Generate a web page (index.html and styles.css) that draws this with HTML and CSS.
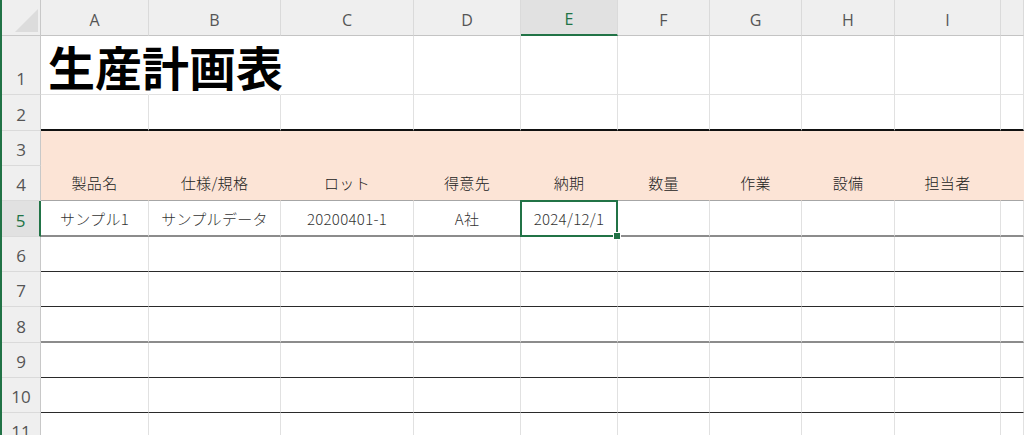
FILE: index.html
```html
<!DOCTYPE html>
<html lang="ja">
<head>
    <meta charset="UTF-8">
    <meta name="viewport" content="width=device-width, initial-scale=1.0">
    <title>生産計画表</title>
    <link rel="stylesheet" href="styles.css">
</head>
<body>
    <div class="window">
        <div id="sheet" class="sheet"></div>
    </div>

    <script>
        const cols = ["A", "B", "C", "D", "E", "F", "G", "H", "I", "J"];
        const activeCol = "E";
        const activeRow = 5;

        const values = {
            1: { A: "生産計画表" },
            4: { A: "製品名", B: "仕様/規格", C: "ロット", D: "得意先", E: "納期", F: "数量", G: "作業", H: "設備", I: "担当者" },
            5: { A: "サンプル1", B: "サンプルデータ", C: "20200401-1", D: "A社", E: "2024/12/1" }
        };

        const sheet = document.getElementById("sheet");

        // column header band
        const head = document.createElement("div");
        head.className = "row row-head";
        head.innerHTML = `<div class="corner"><svg width="24" height="24" viewBox="0 0 24 24"><polygon points="0,23 23,23 23,0" fill="#dcdcdc"/></svg></div>`;
        cols.forEach(c => {
            const h = document.createElement("div");
            h.className = "col-head" + (c === activeCol ? " active" : "");
            h.textContent = c === "J" ? "" : c;
            head.appendChild(h);
        });
        sheet.appendChild(head);

        for (let r = 1; r <= 11; r++) {
            const row = document.createElement("div");
            row.className = `row row-${r}`;

            const num = document.createElement("div");
            num.className = "row-num" + (r === activeRow ? " active" : "");
            num.textContent = r;
            row.appendChild(num);

            cols.forEach(c => {
                const cell = document.createElement("div");
                cell.className = "cell col-" + c;
                if (r === activeRow && c === activeCol) cell.classList.add("selected");
                const v = values[r] && values[r][c];
                if (v) {
                    const span = document.createElement("span");
                    span.textContent = v;
                    if (r === 1) span.className = "title";
                    cell.appendChild(span);
                }
                row.appendChild(cell);
            });
            sheet.appendChild(row);
        }
    </script>
</body>
</html>
```

FILE: styles.css
```css
body {
    margin: 0;
    padding: 0;
    background-color: #fff;
    font-family: "Noto Sans CJK JP", "Noto Sans", sans-serif;
    overflow: hidden;
}
.window {
    height: 435px;
    border-left: 2px solid #217346;
    overflow: hidden;
}
.sheet {
    display: grid;
    grid-template-columns: 39px 108px 132px 133px 107px 97px 92px 92px 93px 106px 1fr;
    grid-template-rows: 36px 59px 36px 35px 35px 36px 35px 35px 36px 35px 35px 35px;
}
.row {
    display: contents;
}

/* headers */
.corner {
    background-color: #efefef;
    border-right: 1px solid #c8c8c8;
    border-bottom: 1px solid #c8c8c8;
    display: flex;
    align-items: flex-end;
    justify-content: flex-end;
    padding: 0 1px 2px 0;
    box-sizing: border-box;
}
.col-head {
    background-color: #efefef;
    border-right: 1px solid #dadada;
    border-bottom: 1px solid #c4c4c4;
    display: flex;
    align-items: center;
    justify-content: center;
    font-family: "Open Sans", "Liberation Sans", sans-serif;
    font-size: 16px;
    color: #555;
    padding-top: 4px;
    box-sizing: border-box;
}
.col-head.active {
    background-color: #e1e1e1;
    border-bottom: 2px solid #217346;
    color: #217346;
}
.row-num {
    background-color: #efefef;
    border-right: 1px solid #c8c8c8;
    border-bottom: 1px solid #dadada;
    display: flex;
    align-items: flex-end;
    justify-content: center;
    padding-bottom: 5px;
    font-family: "Open Sans", "Liberation Sans", sans-serif;
    font-size: 17px;
    line-height: 20px;
    color: #555;
    box-sizing: border-box;
}
.row-num.active {
    background-color: #e1e1e1;
    border-right: 2px solid #217346;
    color: #217346;
}

/* cells */
.cell {
    position: relative;
    border-right: 1px solid #e1e1e1;
    border-bottom: 1px solid #e1e1e1;
    display: flex;
    align-items: flex-end;
    justify-content: center;
    padding-bottom: 7px;
    font-size: 15px;
    font-weight: 300;
    letter-spacing: 0.3px;
    line-height: 20px;
    color: #222;
    white-space: nowrap;
    box-sizing: border-box;
}
.row-1 .col-A {
    justify-content: flex-start;
    padding-left: 7px;
    padding-bottom: 2px;
    overflow: visible;
    z-index: 1;
}
.row-1 .col-A, .row-1 .col-B {
    border-right-color: transparent;
}
.title {
    font-size: 47px;
    font-weight: bold;
    letter-spacing: 0;
    line-height: 52px;
    color: #000;
}
.row-2 .cell {
    border-bottom: 2px solid #111;
}
.row-3 .cell, .row-4 .cell {
    background-color: #fce4d6;
    border-right-color: #fce4d6;
}
.row-3 .cell {
    border-bottom-color: #fce4d6;
}
.row-4 .cell {
    border-bottom: 1px solid #a6a6a6;
}
.row-5 .cell, .row-8 .cell {
    border-bottom: 2px solid #8c8c8c;
}
.row-6 .cell, .row-7 .cell, .row-9 .cell, .row-10 .cell {
    border-bottom: 1px solid #2a2a2a;
}
.row-5 .cell {
    color: #333;
    padding-bottom: 6px;
}

/* active cell */
.cell.selected::after {
    content: "";
    position: absolute;
    top: -1px;
    left: -1px;
    right: -1px;
    bottom: -2px;
    border: 2px solid #217346;
}
.cell.selected::before {
    content: "";
    position: absolute;
    right: -4px;
    bottom: -5px;
    width: 6px;
    height: 6px;
    background-color: #217346;
    border: 1px solid #fff;
    z-index: 2;
}
```
